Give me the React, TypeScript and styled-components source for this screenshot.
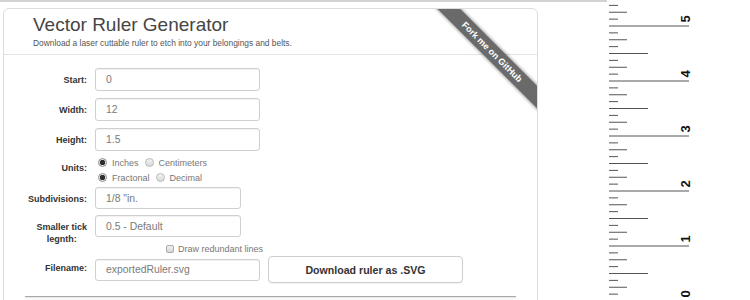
import React from "react";
import styled, { createGlobalStyle } from "styled-components";

const Global = createGlobalStyle`
  html, body { margin: 0; padding: 0; background: #fff; }
  body { font-family: "Liberation Sans", Arial, sans-serif; overflow: hidden; }
`;

const Page = styled.div`
  display: flex;
  align-items: flex-start;
  width: 750px;
  height: 300px;
  overflow: hidden;
`;

const LeftColumn = styled.div`
  flex: none;
  width: 607px;
  display: flex;
  flex-direction: column;
`;

const TopRule = styled.div`
  height: 2px;
  background: #d2d2d2;
`;

const Card = styled.div`
  position: relative;
  box-sizing: border-box;
  width: 535px;
  height: 320px;
  margin: 6px 0 0 3px;
  border: 1px solid #dddddd;
  border-radius: 6px;
  overflow: hidden;
  background: #fff;
`;

const Header = styled.div`
  padding: 6px 30px 6px 29px;
  border-bottom: 1px solid #e3e3e3;
`;

const Title = styled.h1`
  margin: 0;
  font-size: 19px;
  line-height: 20px;
  font-weight: normal;
  color: #454545;
`;

const Subtitle = styled.p`
  margin: 3px 0 0;
  font-size: 8.4px;
  line-height: 10px;
  color: #555;
`;

const Form = styled.form`
  padding-top: 13px;
  display: flex;
  flex-direction: column;
`;

const Row = styled.div<{ $mt?: number }>`
  display: grid;
  grid-template-columns: 83px auto;
  column-gap: 8px;
  align-items: start;
  margin-top: ${(p) => p.$mt ?? 0}px;
`;

const Label = styled.label<{ $pt?: number }>`
  display: flex;
  justify-content: flex-end;
  padding-top: ${(p) => p.$pt ?? 6}px;
  font-size: 9px;
  line-height: 12px;
  font-weight: bold;
  color: #333;
  text-align: right;
`;

const Stacked = styled.span`
  text-align: center;
`;

const TextInput = styled.input<{ $w: number; $h: number }>`
  box-sizing: border-box;
  width: ${(p) => p.$w}px;
  height: ${(p) => p.$h}px;
  margin: 0;
  padding: 0 10px;
  border: 1px solid #cfcfcf;
  border-radius: 3px;
  box-shadow: inset 0 1px 1px rgba(0, 0, 0, 0.06);
  font-family: "Liberation Sans", Arial, sans-serif;
  font-size: 10.4px;
  color: #7a7a7a;
  background: #fff;
  outline: none;
`;

const RadioGroup = styled.div`
  display: flex;
  flex-direction: column;
  padding-left: 3px;
`;

const RadioLine = styled.div`
  display: flex;
  align-items: center;
  height: 15px;
`;

const Option = styled.label`
  display: inline-flex;
  align-items: center;
  gap: 5px;
  margin-right: 6px;
  font-size: 9px;
  color: #777;
`;

const Radio = styled.input`
  appearance: none;
  box-sizing: border-box;
  width: 9px;
  height: 9px;
  margin: 0;
  border-radius: 50%;
  border: 1px solid #b8b8b8;
  background: linear-gradient(#f3f3f3, #d9d9d9);
  &:checked {
    border-color: #8e8e8e;
    background: radial-gradient(circle, #2f2f2f 0 2.4px, #e6e6e6 3px);
  }
`;

const CheckLine = styled.div`
  display: flex;
  align-items: center;
  gap: 4px;
  height: 10px;
  padding-left: 71px;
  font-size: 9px;
  color: #777;
`;

const Checkbox = styled.input`
  appearance: none;
  box-sizing: border-box;
  width: 8px;
  height: 8px;
  margin: 0;
  border: 1px solid #aaa;
  border-radius: 2px;
  background: linear-gradient(#f2f2f2, #d6d6d6);
`;

const FileLine = styled.div`
  display: flex;
  align-items: center;
  gap: 8px;
  height: 27px;
`;

const Button = styled.button`
  box-sizing: border-box;
  width: 195px;
  height: 27px;
  margin: 0;
  border: 1px solid #cdcdcd;
  border-radius: 4px;
  background: #fff;
  box-shadow: 0 1px 1px rgba(0, 0, 0, 0.05);
  font-family: "Liberation Sans", Arial, sans-serif;
  font-size: 10.6px;
  font-weight: bold;
  color: #333;
`;

const Divider = styled.div`
  margin: 13px 21px 0;
  border-top: 1px solid #a8a8a8;
  box-shadow: 0 1px 2px rgba(0, 0, 0, 0.18);
`;

const Ribbon = styled.a`
  position: absolute;
  left: 398px;
  top: 35px;
  width: 180px;
  height: 16px;
  transform: rotate(45deg);
  background: #6a6a6a;
  box-shadow: 0 0 3px 1px rgba(0, 0, 0, 0.35);
  color: #fff;
  font-size: 9px;
  font-weight: bold;
  line-height: 16px;
  text-align: center;
  text-decoration: none;
  white-space: nowrap;
`;

const RulerSvg = styled.svg`
  flex: none;
  display: block;
`;

function Ruler() {
  const pitch = 55 / 8;
  const ticks: React.ReactNode[] = [];
  for (let i = 0; i <= 96; i++) {
    const y = 301 - i * pitch;
    if (y < -5) break;
    const len = i % 8 === 0 ? 80 : i % 4 === 0 ? 39 : i % 2 === 0 ? 18 : 9;
    ticks.push(
      <line key={`t${i}`} x1={2} x2={2 + len} y1={y} y2={y} stroke="#555" strokeWidth={1} />
    );
    if (i % 8 === 0) {
      ticks.push(
        <text
          key={`n${i}`}
          transform={`translate(83 ${y - 7}) rotate(-90)`}
          textAnchor="middle"
          fontFamily='"Liberation Sans", Arial, sans-serif'
          fontWeight="bold"
          fontSize={13}
          fill="#111"
        >
          {i / 8}
        </text>
      );
    }
  }
  return (
    <RulerSvg width={143} height={300} viewBox="0 0 143 300">
      {ticks}
    </RulerSvg>
  );
}

export default function App() {
  return (
    <>
      <Global />
      <Page>
        <LeftColumn>
          <TopRule />
          <Card>
            <Header>
              <Title>Vector Ruler Generator</Title>
              <Subtitle>Download a laser cuttable ruler to etch into your belongings and belts.</Subtitle>
            </Header>
            <Form onSubmit={(e) => e.preventDefault()}>
              <Row>
                <Label>Start:</Label>
                <TextInput $w={165} $h={23} defaultValue="0" />
              </Row>
              <Row $mt={7}>
                <Label>Width:</Label>
                <TextInput $w={165} $h={23} defaultValue="12" />
              </Row>
              <Row $mt={7}>
                <Label>Height:</Label>
                <TextInput $w={165} $h={23} defaultValue="1.5" />
              </Row>
              <Row $mt={4}>
                <Label $pt={7}>Units:</Label>
                <RadioGroup>
                  <RadioLine>
                    <Option>
                      <Radio type="radio" name="units" defaultChecked />
                      Inches
                    </Option>
                    <Option>
                      <Radio type="radio" name="units" />
                      Centimeters
                    </Option>
                  </RadioLine>
                  <RadioLine>
                    <Option>
                      <Radio type="radio" name="style" defaultChecked />
                      Fractonal
                    </Option>
                    <Option>
                      <Radio type="radio" name="style" />
                      Decimal
                    </Option>
                  </RadioLine>
                </RadioGroup>
              </Row>
              <Row $mt={2}>
                <Label>Subdivisions:</Label>
                <TextInput $w={146} $h={22} defaultValue={'1/8 "in.'} />
              </Row>
              <Row $mt={6}>
                <Label>
                  <Stacked>
                    Smaller tick
                    <br />
                    legnth:
                  </Stacked>
                </Label>
                <TextInput $w={146} $h={22} defaultValue="0.5 - Default" />
              </Row>
              <Row $mt={-1}>
                <span />
                <CheckLine>
                  <Checkbox type="checkbox" />
                  Draw redundant lines
                </CheckLine>
              </Row>
              <Row $mt={2}>
                <Label>Filename:</Label>
                <FileLine>
                  <TextInput $w={165} $h={22} defaultValue="exportedRuler.svg" />
                  <Button type="button">Download ruler as .SVG</Button>
                </FileLine>
              </Row>
              <Divider />
            </Form>
            <Ribbon href="#">Fork me on GitHub</Ribbon>
          </Card>
        </LeftColumn>
        <Ruler />
      </Page>
    </>
  );
}
